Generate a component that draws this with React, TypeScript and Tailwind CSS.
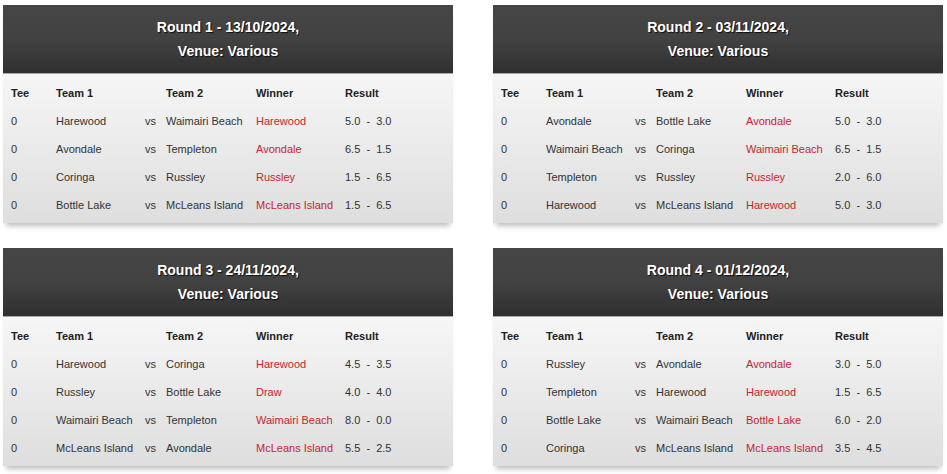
import React from 'react';

type Match = { tee: string; team1: string; team2: string; winner: string; result: string };

const rounds: { title: string; venue: string; matches: Match[] }[] = [
  {
    title: 'Round 1 - 13/10/2024,',
    venue: 'Venue: Various',
    matches: [
      { tee: '0', team1: 'Harewood', team2: 'Waimairi Beach', winner: 'Harewood', result: '5.0  -  3.0' },
      { tee: '0', team1: 'Avondale', team2: 'Templeton', winner: 'Avondale', result: '6.5  -  1.5' },
      { tee: '0', team1: 'Coringa', team2: 'Russley', winner: 'Russley', result: '1.5  -  6.5' },
      { tee: '0', team1: 'Bottle Lake', team2: 'McLeans Island', winner: 'McLeans Island', result: '1.5  -  6.5' },
    ],
  },
  {
    title: 'Round 2 - 03/11/2024,',
    venue: 'Venue: Various',
    matches: [
      { tee: '0', team1: 'Avondale', team2: 'Bottle Lake', winner: 'Avondale', result: '5.0  -  3.0' },
      { tee: '0', team1: 'Waimairi Beach', team2: 'Coringa', winner: 'Waimairi Beach', result: '6.5  -  1.5' },
      { tee: '0', team1: 'Templeton', team2: 'Russley', winner: 'Russley', result: '2.0  -  6.0' },
      { tee: '0', team1: 'Harewood', team2: 'McLeans Island', winner: 'Harewood', result: '5.0  -  3.0' },
    ],
  },
  {
    title: 'Round 3 - 24/11/2024,',
    venue: 'Venue: Various',
    matches: [
      { tee: '0', team1: 'Harewood', team2: 'Coringa', winner: 'Harewood', result: '4.5  -  3.5' },
      { tee: '0', team1: 'Russley', team2: 'Bottle Lake', winner: 'Draw', result: '4.0  -  4.0' },
      { tee: '0', team1: 'Waimairi Beach', team2: 'Templeton', winner: 'Waimairi Beach', result: '8.0  -  0.0' },
      { tee: '0', team1: 'McLeans Island', team2: 'Avondale', winner: 'McLeans Island', result: '5.5  -  2.5' },
    ],
  },
  {
    title: 'Round 4 - 01/12/2024,',
    venue: 'Venue: Various',
    matches: [
      { tee: '0', team1: 'Russley', team2: 'Avondale', winner: 'Avondale', result: '3.0  -  5.0' },
      { tee: '0', team1: 'Templeton', team2: 'Harewood', winner: 'Harewood', result: '1.5  -  6.5' },
      { tee: '0', team1: 'Bottle Lake', team2: 'Waimairi Beach', winner: 'Bottle Lake', result: '6.0  -  2.0' },
      { tee: '0', team1: 'Coringa', team2: 'McLeans Island', winner: 'McLeans Island', result: '3.5  -  4.5' },
    ],
  },
];

const cols = 'grid grid-cols-[45px_89px_21px_90px_89px_1fr] h-[28px] items-center px-[8px] whitespace-pre';

function RoundCard({ title, venue, matches }: { title: string; venue: string; matches: Match[] }) {
  return (
    <div className="w-[450px] shadow-[0_6px_5px_-3px_rgba(0,0,0,0.25)]">
      <div className="bg-gradient-to-b from-[#454545] via-[#424242] to-[#2f2f2f] border-b border-[#a9a9a9] py-[10px] text-center text-white font-bold text-[14px] leading-[24px] [text-shadow:1px_1px_1px_rgba(0,0,0,0.8)]">
        <div>{title}</div>
        <div>{venue}</div>
      </div>
      <div className="bg-gradient-to-b from-[#f6f6f6] to-[#dedede] pt-[5px] pb-[4px] text-[11px] text-[#333]">
        <div className={`${cols} font-bold text-[#222]`}>
          <div>Tee</div>
          <div>Team 1</div>
          <div></div>
          <div>Team 2</div>
          <div>Winner</div>
          <div>Result</div>
        </div>
        {matches.map((m, i) => (
          <div key={i} className={cols}>
            <div>{m.tee}</div>
            <div>{m.team1}</div>
            <div>vs</div>
            <div>{m.team2}</div>
            <div className="text-[#c9242d]">{m.winner}</div>
            <div>{m.result}</div>
          </div>
        ))}
      </div>
    </div>
  );
}

export default function App() {
  return (
    <div className="bg-white w-[947px] h-[474px] pl-[3px] pt-[5px] font-['Liberation_Sans',Arial,sans-serif]">
      <div className="grid grid-cols-[450px_450px] gap-x-[40px] gap-y-[25px]">
        {rounds.map((r, i) => (
          <RoundCard key={i} {...r} />
        ))}
      </div>
    </div>
  );
}
